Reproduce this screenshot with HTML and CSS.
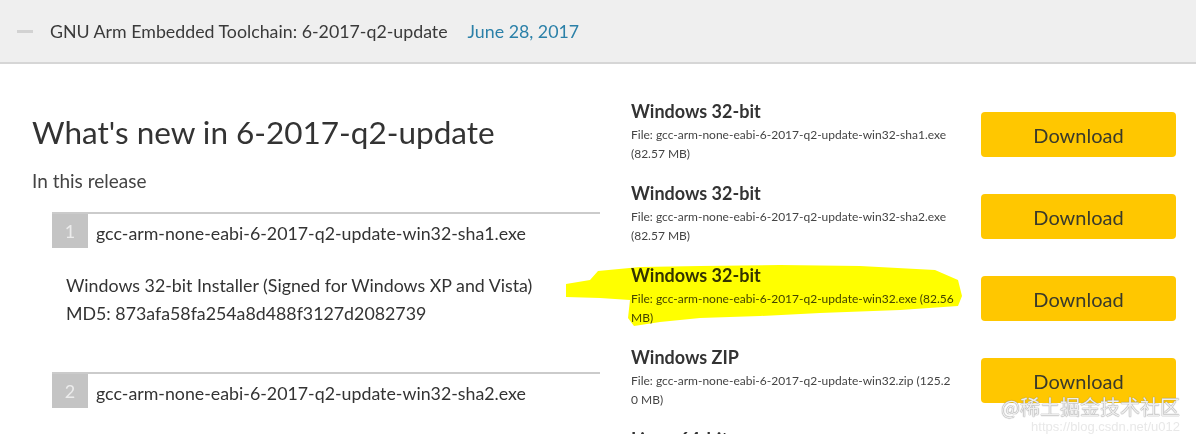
FILE: index.html
```html
<!DOCTYPE html>
<html lang="en">
<head>
    <meta charset="UTF-8">
    <meta name="viewport" content="width=device-width, initial-scale=1.0">
    <title>GNU Arm Embedded Toolchain: 6-2017-q2-update</title>
    <link rel="stylesheet" href="styles.css">
</head>
<body>
    <header class="release-bar">
        <span class="collapse-icon"></span>
        <span class="release-title">GNU Arm Embedded Toolchain: 6-2017-q2-update</span>
        <span class="release-date">June 28, 2017</span>
    </header>

    <main class="release-body">
        <section class="notes">
            <h1>What's new in 6-2017-q2-update</h1>
            <p class="subtitle">In this release</p>

            <ol class="files">
                <li class="file-item">
                    <div class="file-head">
                        <span class="file-num">1</span>
                        <span class="file-name">gcc-arm-none-eabi-6-2017-q2-update-win32-sha1.exe</span>
                    </div>
                    <p class="file-desc">Windows 32-bit Installer (Signed for Windows XP and Vista)<br>MD5: 873afa58fa254a8d488f3127d2082739</p>
                </li>
                <li class="file-item">
                    <div class="file-head">
                        <span class="file-num">2</span>
                        <span class="file-name">gcc-arm-none-eabi-6-2017-q2-update-win32-sha2.exe</span>
                    </div>
                    <p class="file-desc">Windows 32-bit Installer (Signed for Windows 7 and later)</p>
                </li>
            </ol>
        </section>

        <aside class="downloads">
            <div class="dl-row">
                <div class="dl-info">
                    <h3>Windows 32-bit</h3>
                    <p>File: gcc-arm-none-eabi-6-2017-q2-update-win32-sha1.exe<br>(82.57 MB)</p>
                </div>
                <a class="dl-btn" href="#">Download</a>
            </div>
            <div class="dl-row">
                <div class="dl-info">
                    <h3>Windows 32-bit</h3>
                    <p>File: gcc-arm-none-eabi-6-2017-q2-update-win32-sha2.exe<br>(82.57 MB)</p>
                </div>
                <a class="dl-btn" href="#">Download</a>
            </div>
            <div class="dl-row">
                <div class="dl-info">
                    <h3>Windows 32-bit</h3>
                    <p>File: gcc-arm-none-eabi-6-2017-q2-update-win32.exe (82.56<br>MB)</p>
                </div>
                <a class="dl-btn" href="#">Download</a>
            </div>
            <div class="dl-row">
                <div class="dl-info">
                    <h3>Windows ZIP</h3>
                    <p>File: gcc-arm-none-eabi-6-2017-q2-update-win32.zip (125.2<br>0 MB)</p>
                </div>
                <a class="dl-btn" href="#">Download</a>
            </div>
            <div class="dl-row">
                <div class="dl-info">
                    <h3>Linux 64-bit</h3>
                    <p>File: gcc-arm-none-eabi-6-2017-q2-update-linux.tar.bz2<br>(96.64 MB)</p>
                </div>
                <a class="dl-btn" href="#">Download</a>
            </div>
        </aside>
    </main>

    <!-- marker stroke over the third download -->
    <svg class="marker" width="1196" height="434" viewBox="0 0 1196 434">
        <polygon fill="#ffff00" points="598,271 640,267 700,266 780,265 860,266 935,270 958,280 962,296 958,306 900,310 820,313 760,316 700,318 660,322 634,326 628,318 630,300 600,298 566,297 566,284 590,280"/>
    </svg>

    <div class="watermark">
        <span class="wm-main">@稀土掘金技术社区</span>
        <span class="wm-url">https://blog.csdn.net/u012</span>
    </div>
</body>
</html>
```

FILE: styles.css
```css
body {
    margin: 0;
    font-family: Lato, "Open Sans", "Liberation Sans", sans-serif;
    color: #333;
    background: #fff;
    overflow: hidden;
}

.release-bar {
    height: 62px;
    background: #efefef;
    border-bottom: 2px solid #d6d6d6;
    display: flex;
    align-items: center;
    padding-left: 17px;
    font-size: 17.8px;
}
.collapse-icon {
    width: 16px;
    height: 3px;
    background: #d2d2d2;
    margin-right: 17px;
}
.release-title {
    color: #3a3a3a;
    margin-right: 20px;
}
.release-date {
    color: #2b80a8;
}

.release-body {
    display: flex;
    padding: 36px 20px 0 32px;
}

.notes {
    width: 568px;
    padding-top: 12px;
}
.notes h1 {
    font-size: 31.5px;
    font-weight: 400;
    line-height: 40px;
    margin: 0;
    color: #333;
}
.subtitle {
    font-size: 19px;
    line-height: 24px;
    margin: 17px 0 19px;
    color: #444;
}

.files {
    list-style: none;
    margin: 0;
    padding: 0 0 0 20px;
}
.file-item {
    margin-bottom: 45px;
}
.file-head {
    display: flex;
    align-items: center;
    border-top: 2px solid #cbcbcb;
}
.file-num {
    width: 36px;
    height: 34px;
    background: #c4c4c4;
    color: #ececec;
    font-size: 18px;
    display: flex;
    align-items: center;
    justify-content: center;
    margin-right: 8px;
}
.file-name {
    font-size: 17.8px;
    color: #333;
    padding-top: 3px;
}
.file-desc {
    margin: 23px 0 0 14px;
    font-size: 17.8px;
    line-height: 28px;
    color: #333;
}

.downloads {
    margin-left: 31px;
    flex: 1;
}
.dl-row {
    display: flex;
    align-items: flex-start;
    height: 82px;
}
.dl-info {
    width: 340px;
}
.dl-info h3 {
    font-size: 18px;
    font-weight: 700;
    line-height: 22px;
    margin: 0 0 3px;
    color: #333;
}
.dl-info p {
    font-size: 12px;
    line-height: 19px;
    margin: 0;
    color: #444;
}
.dl-btn {
    margin: 12px 0 0 auto;
    width: 195px;
    height: 45px;
    border-radius: 4px;
    background: #ffc700;
    color: #3a3a2a;
    font-size: 20px;
    text-decoration: none;
    display: flex;
    align-items: center;
    justify-content: center;
}

.marker {
    position: absolute;
    left: 0;
    top: 0;
    mix-blend-mode: multiply;
    pointer-events: none;
}

.watermark {
    position: absolute;
    right: 16px;
    top: 394px;
    display: flex;
    flex-direction: column;
    align-items: flex-end;
    font-family: "Noto Sans CJK SC", sans-serif;
}
.wm-main {
    font-size: 20px;
    line-height: 26px;
    color: rgba(255, 255, 255, 0.85);
    text-shadow: 0 0 1px #8a8a8a, 0 0 1px #8a8a8a;
}
.wm-url {
    font-family: "Liberation Sans", sans-serif;
    font-size: 13px;
    line-height: 14px;
    color: #e8e8e8;
}
```
